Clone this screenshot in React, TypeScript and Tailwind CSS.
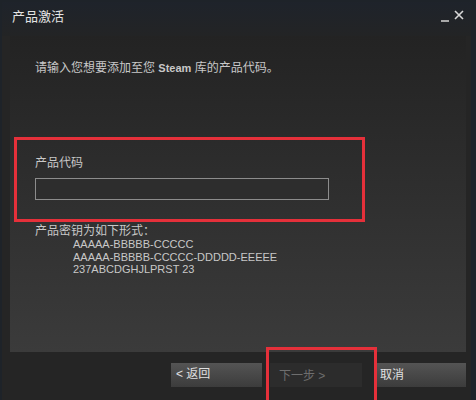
import React from "react";

const font = { fontFamily: '"Liberation Sans", "Noto Sans CJK SC", sans-serif' };

export default function App() {
  return (
    <div
      className="relative w-[476px] h-[400px] overflow-hidden bg-[#252525] text-[#c6c6c6]"
      style={font}
    >
      {/* window frame */}
      <div className="absolute inset-0 border-l-[2px] border-r-[5px] border-t-[2px] border-[#1e2329] pointer-events-none z-20" />
      {/* title bar */}
      <div className="h-[36px] bg-gradient-to-b from-[#1e232b] to-[#232425] flex items-start pt-[8px] pl-[12px] pr-[12px]">
        <span className="text-[13px] leading-[18px] text-[#e4e4e4]">产品激活</span>
        <div className="ml-auto flex items-start gap-[5px] pt-[1px]">
          <div className="w-[8px] h-[2px] bg-[#a8a8a8] mt-[11px]" />
          <svg width="10" height="10" viewBox="0 0 10 10" className="mt-[1px]">
            <path d="M1 1 L9 9 M9 1 L1 9" stroke="#d8d8d8" strokeWidth="1.6" />
          </svg>
        </div>
      </div>
      {/* content panel */}
      <div className="mx-[10px] mr-[10px] h-[316px] bg-gradient-to-b from-[#232323] to-[#3b3b3b] relative">
        <div className="pl-[25px] pt-[25px] text-[12px] leading-[14px] text-[#c8c8c8]">
          请输入您想要添加至您 <span className="font-bold text-[11px]">Steam</span> 库的产品代码。
        </div>
        <div className="absolute left-[4px] top-[101px] w-[351px] h-[85px] border-[3px] border-[#e5303a]" />
        <div className="pl-[25px] pt-[81px] text-[12px] leading-[14px] text-[#c8c8c8]">产品代码</div>
        <div className="ml-[25px] mt-[8px] w-[294px] h-[22px] border border-[#8c8c8c] bg-[#2d2d2d]" />
        <div className="pl-[25px] pt-[24px] text-[12px] leading-[14px] text-[#c8c8c8]">产品密钥为如下形式：</div>
        <div className="pl-[63px] text-[11px] leading-[12.5px] text-[#c8c8c8]">
          <div>AAAAA-BBBBB-CCCCC</div>
          <div>AAAAA-BBBBB-CCCCC-DDDDD-EEEEE</div>
          <div>237ABCDGHJLPRST 23</div>
        </div>
      </div>
      {/* footer */}
      <div className="flex pl-[171px] pt-[11px]">
        <div className="w-[91px] h-[24px] bg-gradient-to-b from-[#545454] to-[#3c3c3c] text-[12px] leading-[14px] text-[#e0e0e0] pl-[5px] pt-[4px]">
          &lt; 返回
        </div>
        <div className="w-[8px]" />
        <div className="w-[92px] h-[24px] bg-[#2c2c2c] text-[12px] leading-[14px] text-[#6e6e6e] pl-[9px] pt-[6px]">
          下一步 &gt;
        </div>
        <div className="w-[14px]" />
        <div className="w-[90px] h-[24px] bg-gradient-to-b from-[#545454] to-[#3c3c3c] text-[12px] leading-[14px] text-[#e0e0e0] pl-[4px] pt-[5px]">
          取消
        </div>
      </div>
      <div className="absolute left-[266px] top-[347px] w-[111px] h-[60px] border-[3px] border-[#e5303a] z-10" />
    </div>
  );
}
